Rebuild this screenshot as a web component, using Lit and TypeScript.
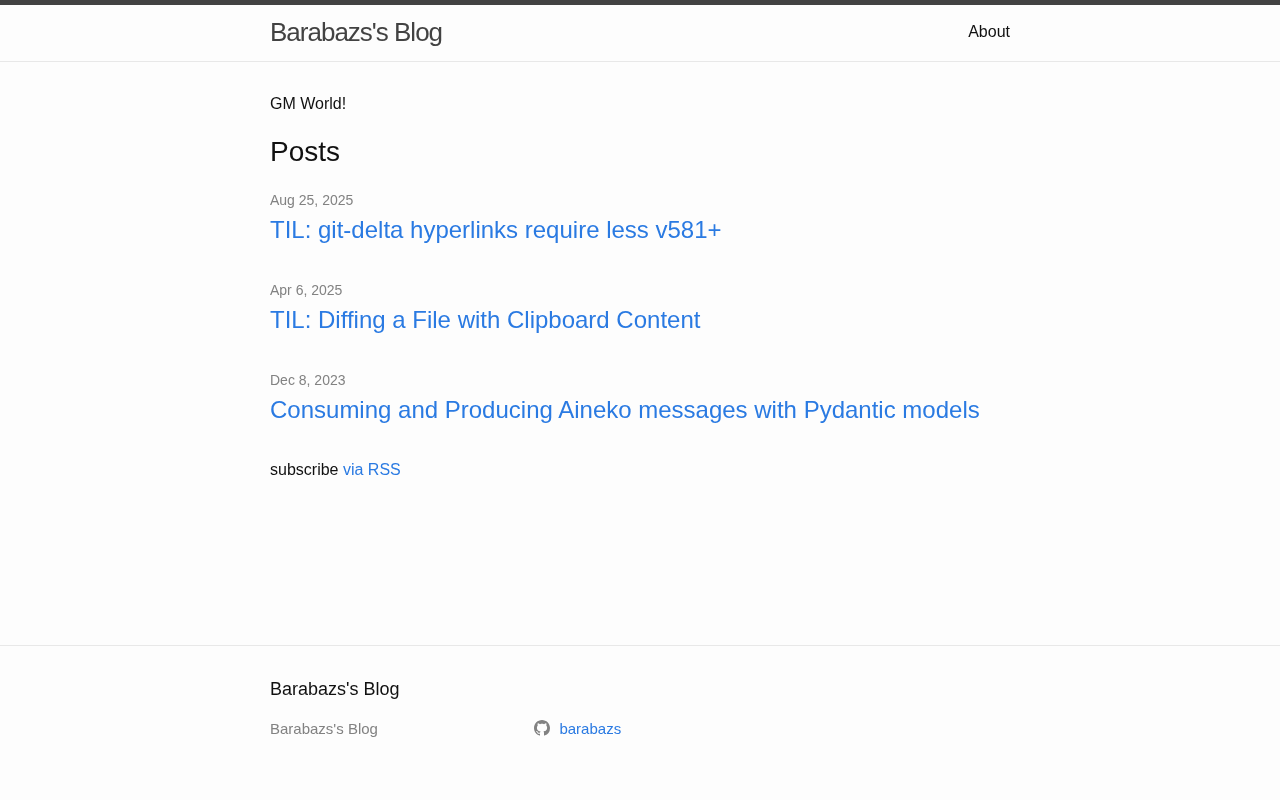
import { LitElement, html, css } from "lit";
import { customElement } from "lit/decorators.js";

const posts = [
  ["Aug 25, 2025", "TIL: git-delta hyperlinks require less v581+"],
  ["Apr 6, 2025", "TIL: Diffing a File with Clipboard Content"],
  ["Dec 8, 2023", "Consuming and Producing Aineko messages with Pydantic models"],
];

@customElement("app-root")
export class AppRoot extends LitElement {
  static styles = css`
    :host {
      display: block;
      background: #fdfdfd;
      color: #111111;
      font: 400 16px/1.5 "Liberation Sans", Arial, sans-serif;
      font-feature-settings: "kern" 1;
      font-kerning: normal;
    }
    .page {
      display: flex;
      flex-direction: column;
      min-height: 800px;
      will-change: transform;
    }
    a { color: #2a7ae2; text-decoration: none; }
    .wrapper { width: 740px; margin: 0 auto; }
    header {
      border-top: 5px solid #424242;
      border-bottom: 1px solid #e8e8e8;
      min-height: 55.95px;
      box-sizing: content-box;
    }
    header .wrapper { display: flex; justify-content: space-between; }
    .title {
      font-size: 26px;
      font-weight: 300;
      line-height: 54px;
      letter-spacing: -1px;
      color: #424242;
    }
    .nav { line-height: 54px; color: #111111; }
    main { flex: 1; padding: 30px 0; }
    .intro { margin: 0 0 15px; }
    h2 { font-size: 28px; font-weight: 400; line-height: 42px; margin: 0 0 15px; }
    .posts { list-style: none; margin: 0 0 30px; padding: 0; }
    .posts li { margin-bottom: 30px; }
    .meta-line { line-height: 24px; }
    .meta { font-size: 14px; color: #828282; }
    .post-link { display: block; font-size: 24px; line-height: 36px; }
    .rss { margin: 0 0 15px; }
    footer { border-top: 1px solid #e8e8e8; padding: 30px 0; }
    .footer-heading { font-size: 18px; line-height: 27px; margin: 0 0 15px; }
    .cols { display: flex; font-size: 15px; line-height: 22.5px; color: #828282; margin-bottom: 30px; }
    .col1 { width: 264.25px; }
    .gh svg {
      display: inline-block;
      box-sizing: content-box;
      width: 16px;
      height: 16px;
      fill: #828282;
      padding-right: 5px;
      vertical-align: text-top;
    }
  `;

  render() {
    return html`
      <div class="page">
      <header>
        <div class="wrapper">
          <div class="title">Barabazs's Blog</div>
          <div class="nav">About</div>
        </div>
      </header>
      <main>
        <div class="wrapper">
          <p class="intro">GM World!</p>
          <h2>Posts</h2>
          <ul class="posts">
            ${posts.map(
              ([d, t]) => html`<li><div class="meta-line"><span class="meta">${d}</span></div><a class="post-link" href="#">${t}</a></li>`
            )}
          </ul>
          <p class="rss">subscribe <a href="#">via RSS</a></p>
        </div>
      </main>
      <footer>
        <div class="wrapper">
          <div class="footer-heading">Barabazs's Blog</div>
          <div class="cols">
            <div class="col1">Barabazs's Blog</div>
            <div class="gh">
              <a href="#"><svg viewBox="0 0 16 16"><path d="M8 0C3.58 0 0 3.58 0 8c0 3.54 2.29 6.53 5.47 7.59.4.07.55-.17.55-.38 0-.19-.01-.82-.01-1.49-2.01.37-2.53-.49-2.69-.94-.09-.23-.48-.94-.82-1.13-.28-.15-.68-.52-.01-.53.63-.01 1.08.58 1.23.82.72 1.21 1.87.87 2.33.66.07-.52.28-.87.51-1.07-1.78-.2-3.64-.89-3.64-3.95 0-.87.31-1.59.82-2.15-.08-.2-.36-1.02.08-2.12 0 0 .67-.21 2.2.82.64-.18 1.32-.27 2-.27s1.36.09 2 .27c1.53-1.04 2.2-.82 2.2-.82.44 1.1.16 1.92.08 2.12.51.56.82 1.27.82 2.15 0 3.07-1.87 3.75-3.65 3.95.29.25.54.73.54 1.48 0 1.07-.01 1.93-.01 2.2 0 .21.15.46.55.38A8.01 8.01 0 0 0 16 8c0-4.42-3.58-8-8-8z"/></svg> <span>barabazs</span></a>
            </div>
          </div>
        </div>
      </footer>
      </div>
    `;
  }
}
